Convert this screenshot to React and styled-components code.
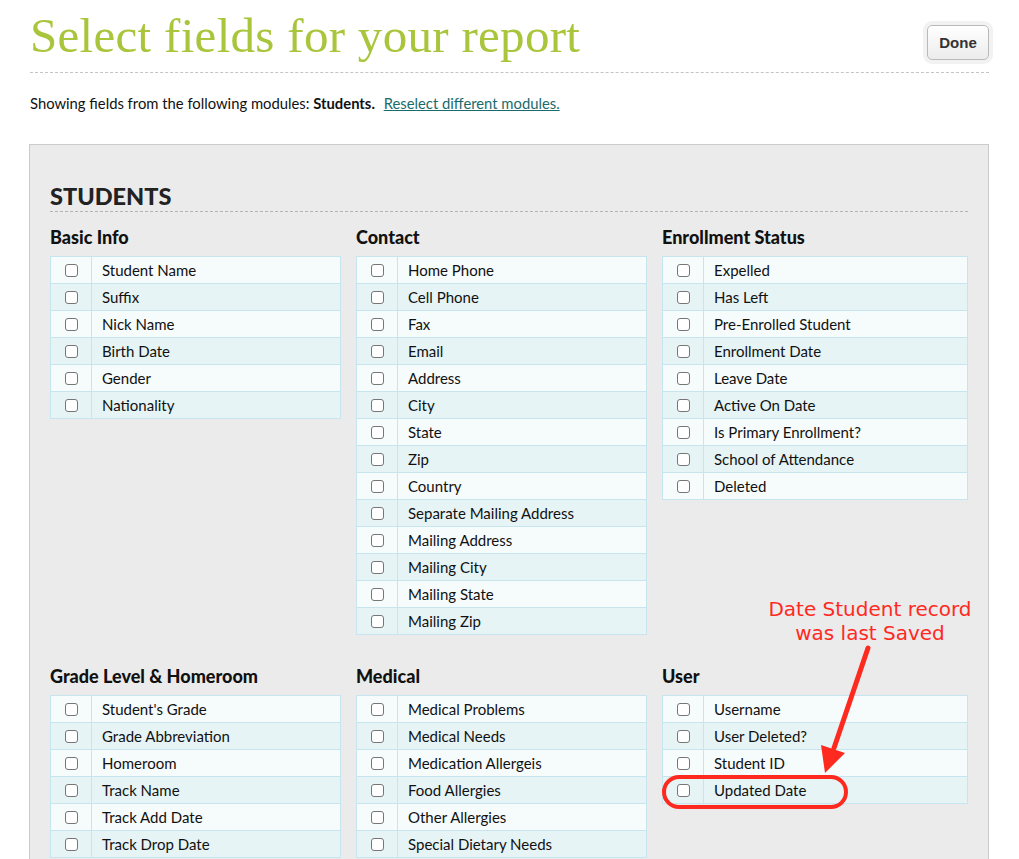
import React from "react";
import styled, { createGlobalStyle } from "styled-components";

const GlobalStyle = createGlobalStyle`
  body {
    margin: 0;
    background: #fff;
    font-family: Lato, "Open Sans", Arial, sans-serif;
    color: #111;
  }
`;

const sections = [
  {
    title: "Basic Info",
    fields: ["Student Name", "Suffix", "Nick Name", "Birth Date", "Gender", "Nationality"],
  },
  {
    title: "Contact",
    fields: [
      "Home Phone",
      "Cell Phone",
      "Fax",
      "Email",
      "Address",
      "City",
      "State",
      "Zip",
      "Country",
      "Separate Mailing Address",
      "Mailing Address",
      "Mailing City",
      "Mailing State",
      "Mailing Zip",
    ],
  },
  {
    title: "Enrollment Status",
    fields: [
      "Expelled",
      "Has Left",
      "Pre-Enrolled Student",
      "Enrollment Date",
      "Leave Date",
      "Active On Date",
      "Is Primary Enrollment?",
      "School of Attendance",
      "Deleted",
    ],
  },
  {
    title: "Grade Level & Homeroom",
    fields: [
      "Student's Grade",
      "Grade Abbreviation",
      "Homeroom",
      "Track Name",
      "Track Add Date",
      "Track Drop Date",
    ],
  },
  {
    title: "Medical",
    fields: [
      "Medical Problems",
      "Medical Needs",
      "Medication Allergeis",
      "Food Allergies",
      "Other Allergies",
      "Special Dietary Needs",
    ],
  },
  {
    title: "User",
    fields: ["Username", "User Deleted?", "Student ID", "Updated Date"],
  },
];

const Page = styled.div`
  position: relative;
  width: 959px;
  padding: 0 30px;
  height: 859px;
  overflow: hidden;
`;

const Header = styled.header`
  display: flex;
  justify-content: space-between;
  align-items: flex-start;
  height: 72px;
  border-bottom: 1px dashed #c4c4c4;
`;

const Title = styled.h1`
  margin: 9px 0 0;
  font-family: "Liberation Serif", "DejaVu Serif", serif;
  font-weight: normal;
  font-size: 49px;
  line-height: 54px;
  color: #a9c53c;
  letter-spacing: 0.3px;
`;

const DoneButton = styled.button`
  margin-top: 25px;
  width: 62px;
  height: 35px;
  border: 1px solid #b9b9b9;
  border-radius: 5px;
  background: linear-gradient(#ffffff, #ececec);
  box-shadow: 0 0 0 4px #f2f2f2;
  font-family: "Liberation Sans", Arial, sans-serif;
  font-weight: bold;
  font-size: 15px;
  color: #333;
  cursor: pointer;
`;

const Intro = styled.p`
  margin: 21px 0 0;
  font-size: 14.8px;
  line-height: 18px;
  height: 50px;

  strong {
    font-weight: bold;
  }
`;

const ReselectLink = styled.a`
  margin-left: 5px;
  color: #1b6b6b;
  text-decoration: underline;
  cursor: pointer;
`;

const Panel = styled.section`
  margin-left: -1px;
  background: #ebebeb;
  border: 1px solid #cbcbcb;
  padding: 38px 20px 40px;
  min-height: 760px;
`;

const ModuleTitle = styled.h2`
  margin: 0;
  padding-bottom: 2px;
  font-size: 23.5px;
  line-height: 26px;
  font-weight: 900;
  color: #222;
  border-bottom: 1px dashed #b4b4b4;
`;

const Grid = styled.div`
  display: grid;
  grid-template-columns: 291px 291px 306px;
  column-gap: 15px;
  row-gap: 30px;
  margin-top: 14px;
`;

const SectionTitle = styled.h3`
  margin: 0 0 8px;
  font-size: 18px;
  line-height: 22px;
  font-weight: 900;
  color: #111;
`;

const FieldTable = styled.table`
  width: 100%;
  border-collapse: collapse;
  font-size: 15px;
`;

const Row = styled.tr`
  background: ${(p) => (p.$odd ? "#e6f4f6" : "#f6fbfc")};
  height: 27px;
`;

const Cell = styled.td`
  border: 1px solid #c7e5ee;
  padding: 0 0 0 10px;
  height: 26px;
`;

const CheckCell = styled.td`
  border: 1px solid #c7e5ee;
  width: 40px;
  padding: 0;
  text-align: center;
  vertical-align: middle;
`;

const Check = styled.input.attrs({ type: "checkbox" })`
  appearance: none;
  display: inline-block;
  width: 13px;
  height: 13px;
  margin: 3px 0 0;
  border: 1px solid #767676;
  border-radius: 3px;
  background: #fff;
  box-sizing: border-box;
`;

const Overlay = styled.svg`
  position: absolute;
  left: 0;
  top: 0;
  pointer-events: none;
`;

const Note = styled.div`
  position: absolute;
  left: 740px;
  top: 597px;
  width: 260px;
  text-align: center;
  font-family: "DejaVu Sans", Verdana, sans-serif;
  font-size: 20px;
  line-height: 24px;
  color: #ff2a1f;
  pointer-events: none;
`;

function Section({ title, fields }) {
  return (
    <div>
      <SectionTitle>{title}</SectionTitle>
      <FieldTable>
        <tbody>
          {fields.map((f, i) => (
            <Row key={f} $odd={i % 2 === 1}>
              <CheckCell>
                <Check aria-label={f} />
              </CheckCell>
              <Cell>{f}</Cell>
            </Row>
          ))}
        </tbody>
      </FieldTable>
    </div>
  );
}

export default function App() {
  return (
    <>
      <GlobalStyle />
      <Page>
        <Header>
          <Title>Select fields for your report</Title>
          <DoneButton>Done</DoneButton>
        </Header>
        <Intro>
          Showing fields from the following modules: <strong>Students.</strong>{" "}
          <ReselectLink>Reselect different modules.</ReselectLink>
        </Intro>
        <Panel>
          <ModuleTitle>STUDENTS</ModuleTitle>
          <Grid>
            {sections.map((s) => (
              <Section key={s.title} {...s} />
            ))}
          </Grid>
        </Panel>

        <Note>
          Date Student record
          <br />
          was last Saved
        </Note>
        <Overlay width="1019" height="859" viewBox="0 0 1019 859">
          <line
            x1="868"
            y1="648"
            x2="834"
            y2="748"
            stroke="#ff2a1f"
            strokeWidth="5"
            strokeLinecap="round"
          />
          <polygon points="825,773 821,745 845,753" fill="#ff2a1f" />
          <rect
            x="664"
            y="777"
            width="182"
            height="30"
            rx="15"
            fill="none"
            stroke="#ff2a1f"
            strokeWidth="4"
          />
        </Overlay>
      </Page>
    </>
  );
}
